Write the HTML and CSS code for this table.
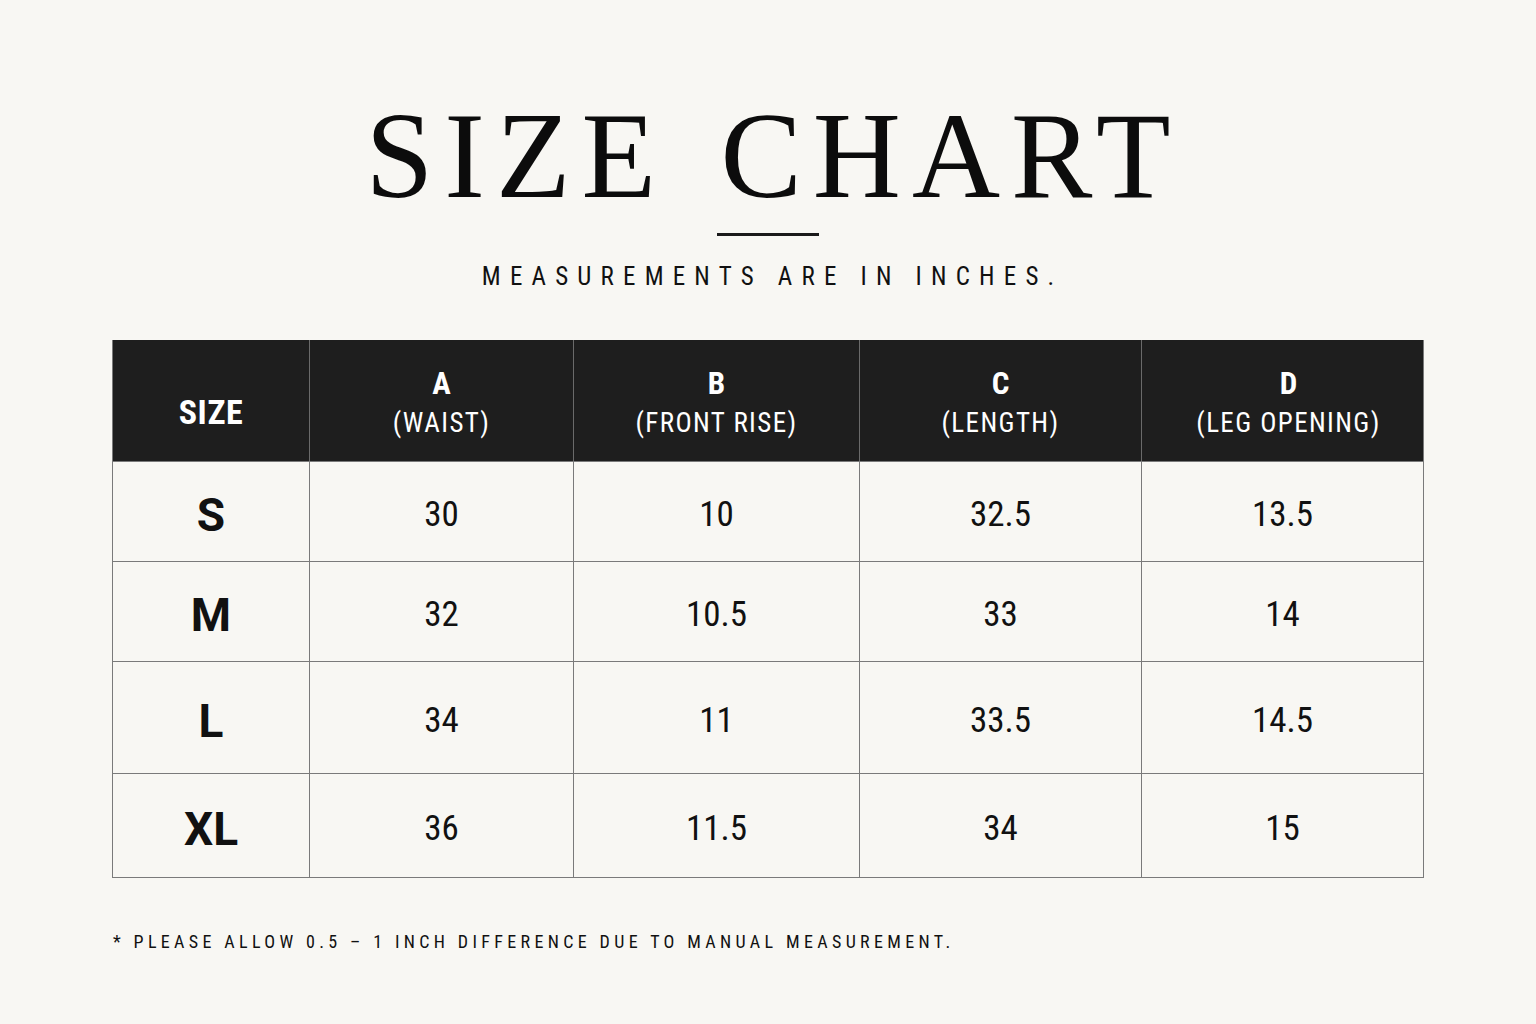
FILE: index.html
```html
<!DOCTYPE html>
<html lang="en">
<head>
<meta charset="utf-8">
<title>Size Chart</title>
<link rel="stylesheet" href="styles.css">
</head>
<body>
<main class="page">
  <header class="head">
    <h1 class="title">SIZE CHART</h1>
    <div class="rule"></div>
    <p class="subtitle">MEASUREMENTS ARE IN INCHES.</p>
  </header>

  <section class="chart">
    <div class="row row-head">
      <div class="cell cell-size-h">SIZE</div>
      <div class="cell"><span class="letter">A</span><span class="desc">(WAIST)</span></div>
      <div class="cell"><span class="letter">B</span><span class="desc">(FRONT RISE)</span></div>
      <div class="cell"><span class="letter">C</span><span class="desc">(LENGTH)</span></div>
      <div class="cell cell-d"><span class="letter">D</span><span class="desc">(LEG OPENING)</span></div>
    </div>
    <div class="row row-body r1">
      <div class="cell size">S</div>
      <div class="cell">30</div>
      <div class="cell">10</div>
      <div class="cell">32.5</div>
      <div class="cell">13.5</div>
    </div>
    <div class="row row-body r2">
      <div class="cell size">M</div>
      <div class="cell">32</div>
      <div class="cell">10.5</div>
      <div class="cell">33</div>
      <div class="cell">14</div>
    </div>
    <div class="row row-body r3">
      <div class="cell size">L</div>
      <div class="cell">34</div>
      <div class="cell">11</div>
      <div class="cell">33.5</div>
      <div class="cell">14.5</div>
    </div>
    <div class="row row-body r4">
      <div class="cell size">XL</div>
      <div class="cell">36</div>
      <div class="cell">11.5</div>
      <div class="cell">34</div>
      <div class="cell">15</div>
    </div>
  </section>

  <p class="note">* PLEASE ALLOW 0.5 – 1 INCH DIFFERENCE DUE TO MANUAL MEASUREMENT.</p>
</main>
</body>
</html>
```

FILE: styles.css
```css
* { box-sizing: border-box; }

html, body {
  margin: 0;
  padding: 0;
  background: #f8f7f3;
  color: #111;
}

.page {
  width: 1536px;
  height: 1024px;
  padding: 95px 112px 0 112px;
  display: flex;
  flex-direction: column;
}

.head {
  display: flex;
  flex-direction: column;
  align-items: center;
}

.title {
  margin: 0 -11px 0 0;
  font-family: "Liberation Serif", "Times New Roman", serif;
  font-weight: 400;
  font-size: 122px;
  line-height: 1;
  letter-spacing: 11px;
  word-spacing: 12px;
  color: #0c0c0c;
}

.rule {
  width: 102px;
  height: 3px;
  background: #1a1a1a;
  margin-top: 16px;
}

.subtitle {
  margin: 28px -9.2px 0 0;
  font-family: "Roboto Condensed", "Liberation Sans Narrow", sans-serif;
  font-size: 25px;
  line-height: 1;
  letter-spacing: 9.2px;
  color: #111;
}

.chart {
  margin-top: 51px;
  width: 1312px;
  border: 1px solid #7a7a7a;
  border-top: none;
  font-family: "Roboto Condensed", "Liberation Sans Narrow", sans-serif;
}

.row {
  display: grid;
  grid-template-columns: 196px 264px 286px 282px 282px;
}

.cell {
  display: flex;
  flex-direction: column;
  align-items: center;
  justify-content: center;
  border-left: 1px solid #7a7a7a;
  font-size: 35px;
  color: #111;
}
.cell:first-child { border-left: none; }

.row-head {
  background: #1e1e1e;
  height: 121px;
}
.row-head .cell {
  color: #fff;
  border-left-color: #6a6a6a;
  padding-top: 4px;
}
.row-head .cell-size-h {
  font-weight: 700;
  font-size: 34px;
  letter-spacing: 0.6px;
  padding-top: 22px;
}
.row-head .cell-d {
  padding-left: 12px;
}
.letter {
  font-weight: 700;
  font-size: 31px;
  line-height: 1;
}
.desc {
  font-size: 27px;
  letter-spacing: 1.4px;
  line-height: 1;
  margin-top: 11px;
}

.row-body {
  border-top: 1px solid #7a7a7a;
}
.row-body .cell {
  padding-top: 6px;
}
.r1 { height: 100px; }
.r2 { height: 100px; }
.r3 { height: 112px; }
.r4 { height: 104px; }

.size {
  font-family: Roboto, "Liberation Sans", sans-serif;
  font-weight: 700;
  font-size: 46px;
}

.note {
  margin: 55px 0 0 1px;
  font-family: "Roboto Condensed", "Liberation Sans Narrow", sans-serif;
  font-size: 18px;
  letter-spacing: 4.35px;
  line-height: 1;
  color: #111;
}
```
